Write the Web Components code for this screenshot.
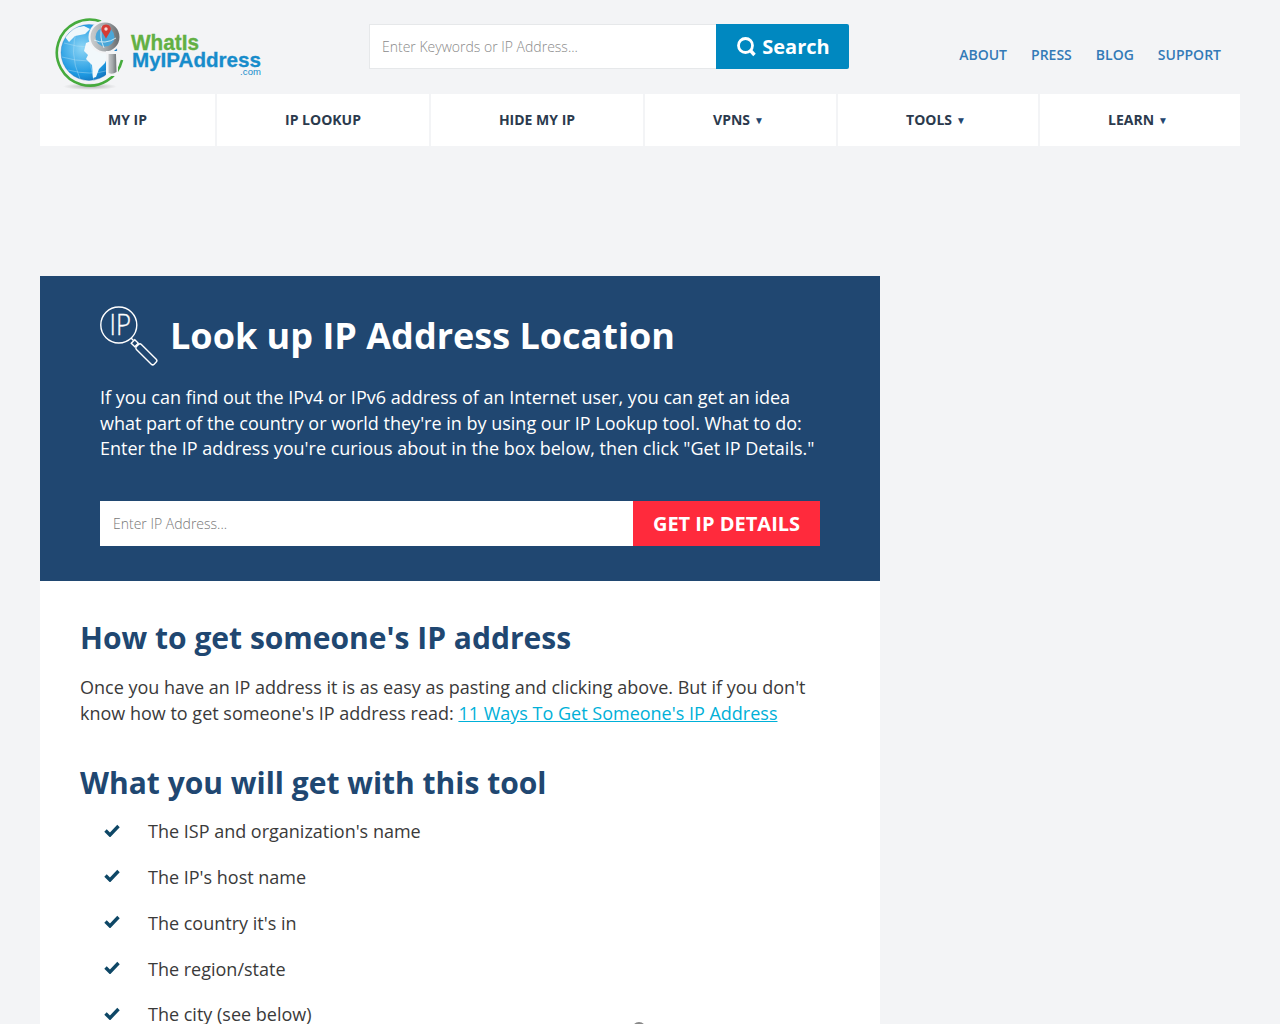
<!DOCTYPE html>
<html lang="en"><head><meta charset="utf-8"><title>Look up IP Address Location</title>
<style>
html,body{margin:0;padding:0;background:#f3f4f6;height:1024px;overflow:hidden}
body{font-family:"Open Sans",sans-serif;color:#333}
</style></head><body>
<site-page></site-page>
<script>
function def(name, html){
  customElements.define(name, class extends HTMLElement{
    constructor(){super();this.attachShadow({mode:'open'}).innerHTML=html;}
  });
}
def('site-logo',`<style>:host{display:block;width:210px;height:80px}svg{display:block}
text{font-family:"Liberation Sans",sans-serif;font-weight:700}</style>
<svg width="210" height="80" viewBox="0 0 210 80">
<defs><radialGradient id="g" cx=".38" cy=".42" r=".72"><stop offset="0" stop-color="#8fd6f6"/><stop offset=".65" stop-color="#1f9ae2"/><stop offset="1" stop-color="#0c62ad"/></radialGradient>
<radialGradient id="s" cx=".5" cy=".5" r=".5"><stop offset="0" stop-color="#888" stop-opacity=".6"/><stop offset="1" stop-color="#888" stop-opacity="0"/></radialGradient>
<linearGradient id="m" x1="0" x2="1"><stop offset="0" stop-color="#c5c8ca"/><stop offset=".5" stop-color="#a4a8ab"/><stop offset="1" stop-color="#6f7477"/></linearGradient></defs>
<g transform="translate(1,0)">
<ellipse cx="34" cy="73.500" rx="27" ry="3.500" fill="url(#s)"/>
<path d="M45 8.500A33 33 0 1 0 66 47" fill="none" stroke="#46ab3d" stroke-width="2.600"/>
<circle cx="33" cy="39.500" r="28" fill="url(#g)"/>
<g fill="none" stroke="#bfe4f6" stroke-width=".5" opacity=".8"><path d="M8 30q25 8 50 0M6 44q27 8 54 0M12 57q22 6 42 0M22 14q-10 25 2 52M38 12q-8 28 0 56"/></g>
<path d="M9 24l9-9 10-2 6 3-5 5-10 2-6 6z" fill="#eef7fb"/>
<path d="M30 30l8-3 8 4 8 4-2 8-3 7-6 6-3 8-3 1-1-13-6-6 2-4-4-4z" fill="#f2f8fb"/>
<circle cx="33" cy="39.500" r="28" fill="none" stroke="#0c62ad" stroke-width=".6" opacity=".5"/>
<circle cx="49" cy="24" r="16.500" fill="#f3f4f6"/>
<circle cx="49" cy="24" r="12" fill="#4ba7d9" stroke="url(#m)" stroke-width="5"/>
<path d="M38 27q11 5 22-2M46 13q-3 11 2 22" fill="none" stroke="#d8eef7" stroke-width=".9"/>
<path d="M50 25.500l-4.200-7a4.800 4.800 0 1 1 8.400 0z" fill="#d43c36"/><circle cx="50" cy="16" r="1.700" fill="#f6d8d5"/>
<path d="M50 38h12v25H50z" fill="#f3f4f6"/>
<path d="M52.500 41h7.500l.5 18q-4 3-8 1z" fill="url(#m)"/>
</g>
<text x="76" y="37" font-size="22" fill="#62b044" stroke="#62b044" stroke-width=".3" textLength="68" lengthAdjust="spacingAndGlyphs">WhatIs</text>
<text x="77" y="54" font-size="21" fill="#178ccb" stroke="#178ccb" stroke-width=".3" textLength="129" lengthAdjust="spacingAndGlyphs">MyIPAddress</text>
<text x="185" y="62" font-size="9.500" fill="#178ccb" textLength="21" style="font-weight:400">.com</text>
</svg>`);
def('search-box',`<style>:host{display:flex;width:480px;height:45px;box-sizing:border-box}
.i{flex:1;background:#fff;border:1px solid #e6e8ea;border-right:0;box-sizing:border-box;display:flex;align-items:center;padding-left:12px;font-size:14px;color:#8a8a8a;font-weight:300}
.b{width:133px;box-sizing:border-box;padding-left:2px;background:#0088c0;border-radius:0 2px 2px 0;color:#fff;font-weight:700;font-size:20px;display:flex;align-items:center;justify-content:center;gap:6px}
svg{display:block}</style>
<div class="i">Enter Keywords or IP Address...</div>
<div class="b"><svg width="19" height="20" viewBox="0 0 19 20"><circle cx="8.500" cy="8.500" r="7" fill="none" stroke="#fff" stroke-width="2.800"/><path d="M13 13l4.500 5" stroke="#fff" stroke-width="3.400" fill="none"/></svg><span>Search</span></div>`);
def('top-links',`<style>:host{display:flex;gap:24px;font-size:14px;font-weight:600;color:#337ab7}</style>
<span>ABOUT</span><span>PRESS</span><span>BLOG</span><span>SUPPORT</span>`);
def('site-header',`<style>:host{display:flex;height:94px;box-sizing:border-box}
.l{width:329px;padding:13px 0 0 15px;box-sizing:border-box}
.s{padding-top:24px}
.t{margin-left:auto;padding:45px 19px 0 0}
</style>
<div class="l"><site-logo></site-logo></div>
<div class="s"><search-box></search-box></div>
<div class="t"><top-links></top-links></div>`);
def('nav-item',`<style>:host{display:flex;align-items:center;justify-content:center;background:#fff;font-size:14px;font-weight:700;color:#2b3a4d;height:52px;box-sizing:border-box;padding-bottom:2px}</style><slot></slot>`);
def('main-nav',`<style>:host{display:grid;grid-template-columns:175px 212px 212px 191px 200px 200px;gap:2px}
.d{padding-right:4px}
.d::after{content:"▼";font-size:10px;color:#24466f;margin-left:4px;position:relative;top:-1px}</style>
<nav-item>MY IP</nav-item><nav-item>IP LOOKUP</nav-item><nav-item>HIDE MY IP</nav-item>
<nav-item><span class="d">VPNS</span></nav-item><nav-item><span class="d">TOOLS</span></nav-item><nav-item><span class="d">LEARN</span></nav-item>`);
def('ip-icon',`<style>:host{display:block;width:60px;height:60px}text{font-family:"Open Sans",sans-serif;font-weight:300}svg{display:block;overflow:visible}</style>
<svg width="60" height="60" viewBox="0 0 60 60" fill="none" stroke="#fff" stroke-width="1.400">
<circle cx="18.800" cy="19" r="18"/>
<text transform="translate(9.500,28.500) scale(.9,1)" font-size="28.500" fill="#fff" stroke="#fff" stroke-width=".3">IP</text>
<path d="M31 32l2.500 2.500"/>
<rect x="0" y="-2.500" width="5" height="5" transform="translate(33,35.500) rotate(45)"/>
<rect x="0" y="-3.500" width="25" height="7" rx="2" transform="translate(37.500,39.500) rotate(45)"/>
</svg>`);
def('hero-panel',`<style>:host{display:block;background:#204771;color:#fff;padding:30px 60px 35px;height:305px;box-sizing:border-box}
.h{display:flex;align-items:center;gap:10px;height:60px}
h1{margin:0;font-size:36px;font-weight:700;line-height:60px}
p{margin:19px 0 0;font-size:18px;line-height:25.700px}
.f{display:flex;margin-top:39px;height:45px}
.i{flex:1;background:#fff;display:flex;align-items:center;padding-left:13px;font-size:14px;font-weight:300;color:#777}
.b{width:187px;background:#ff2a3c;color:#fff;font-weight:700;font-size:20px;display:flex;align-items:center;justify-content:center}
</style>
<div class="h"><ip-icon></ip-icon><h1>Look up IP Address Location</h1></div>
<p>If you can find out the IPv4 or IPv6 address of an Internet user, you can get an idea what part of the country or world they're in by using our IP Lookup tool. What to do: Enter the IP address you're curious about in the box below, then click "Get IP Details."</p>
<div class="f"><div class="i">Enter IP Address...</div><div class="b">GET IP DETAILS</div></div>`);
def('check-item',`<style>:host{display:flex;align-items:flex-start;height:45.800px;font-size:18px;line-height:26px;color:#3a3a3a}
svg{margin:5.500px 0 0 24px;flex:none}span{margin-left:28px}</style>
<svg width="16" height="13" viewBox="0 0 16 13"><path d="M1.500 6.500l4.500 4.500 8.500-9" fill="none" stroke="#0e4766" stroke-width="3.400"/></svg><span><slot></slot></span>`);
def('content-card',`<style>:host{display:block;background:#fff;padding:37px 40px 0;position:relative;height:443px;box-sizing:border-box;overflow:hidden}
h2{margin:0;font-size:30px;line-height:40px;font-weight:700;color:#204771}
p{margin:16px 0 0;font-size:18px;line-height:26px;color:#3a3a3a}
a{color:#00b0d8;text-decoration:underline}
h2.b{margin-top:37px}
.l{margin-top:15.200px}
.dot{position:absolute;left:592px;top:441px;width:10px;height:10px;border-radius:50%;border:2px solid #888}
</style>
<h2>How to get someone's IP address</h2>
<p>Once you have an IP address it is as easy as pasting and clicking above. But if you don't know how to get someone's IP address read: <a href="#">11 Ways To Get Someone's IP Address</a></p>
<h2 class="b">What you will get with this tool</h2>
<div class="l"><check-item>The ISP and organization's name</check-item><check-item>The IP's host name</check-item><check-item>The country it's in</check-item><check-item>The region/state</check-item><check-item>The city (see below)</check-item></div>
<div class="dot"></div>`);
def('site-page',`<style>:host{display:block;padding:0 40px}
.m{width:840px;margin-top:130px}</style>
<site-header></site-header><main-nav></main-nav>
<div class="m"><hero-panel></hero-panel><content-card></content-card></div>`);
</script>
</body></html>
